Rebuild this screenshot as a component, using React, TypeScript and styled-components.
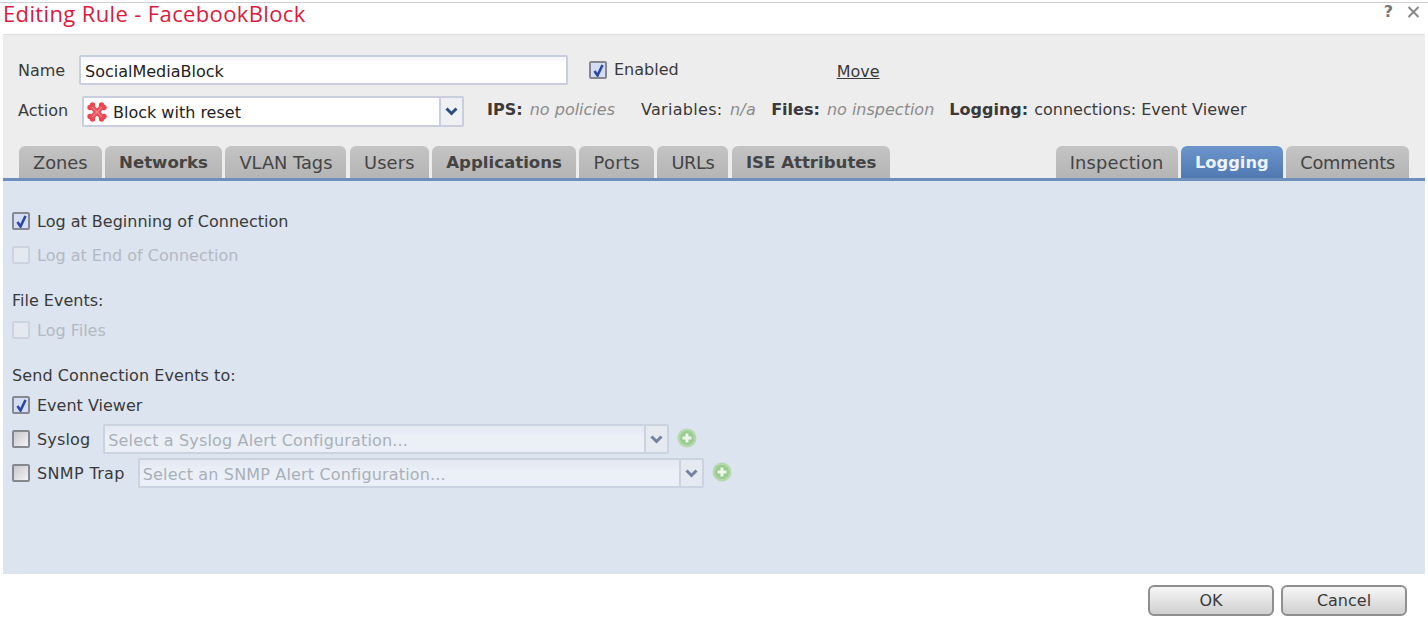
import { createGlobalStyle, styled } from "styled-components";

const GlobalStyle = createGlobalStyle`
    html, body { margin: 0; padding: 0; background: #fff; }
    body {
        font-family: "DejaVu Sans", Verdana, sans-serif;
        font-size: 16px;
        color: #3a3a3a;
        overflow: hidden;
    }
`;

const Dialog = styled.div`
    width: 1428px;
    height: 619px;
    display: flex;
    flex-direction: column;
    padding-top: 2px;
    box-sizing: border-box;
`;

const TitleBar = styled.div`
    height: 33px;
    flex: none;
    box-sizing: border-box;
    border-top: 1px solid #cfcfcf;
    display: flex;
    justify-content: space-between;
    padding: 0 8px 0 3px;
`;

const Title = styled.div`
    font-family: "Open Sans", sans-serif;
    font-size: 22px;
    letter-spacing: 0.37px;
    line-height: 20px;
    color: #dc1a40;
`;

const TitleIcons = styled.div`
    display: flex;
    align-items: flex-start;
    gap: 14px;
    font-size: 16px;
    font-weight: bold;
    line-height: 16px;
    color: #777;
    padding-top: 1px;
`;

const CloseIcon = styled.svg`
    margin-top: 2px;
`;

const Panel = styled.div`
    margin: 0 3px;
    height: 539px;
    flex: none;
    display: flex;
    flex-direction: column;
    box-shadow: 0 -1px 0 #e0e0e0;
`;

const Header = styled.div`
    background: #ededed;
    height: 143px;
    flex: none;
    box-sizing: border-box;
    padding: 20px 15px 0;
    display: flex;
    flex-direction: column;
`;

const Row = styled.div<{ $top?: number; $h?: number }>`
    display: flex;
    align-items: center;
    height: ${p => p.$h ?? 30}px;
    margin-top: ${p => p.$top ?? 0}px;
    white-space: nowrap;
`;

const FieldLabel = styled.span<{ $w: number }>`
    width: ${p => p.$w}px;
    flex: none;
    padding-bottom: ${p => (p.$w === 63 ? 2 : 0)}px;
    box-sizing: border-box;
`;

const TextInput = styled.div`
    width: 489px;
    height: 30px;
    box-sizing: border-box;
    border: 2px solid #c9cede;
    background: linear-gradient(#f4f5f8, #fff 30%);
    color: #222;
    line-height: 29px;
    padding-left: 4px;
    border-radius: 2px;
`;

const Check = styled.span<{ $on?: boolean; $off?: boolean }>`
    width: 18px;
    height: 18px;
    flex: none;
    box-sizing: border-box;
    display: inline-flex;
    align-items: center;
    justify-content: center;
    border: 2px solid ${p => (p.$off ? "#ced4df" : "#85888f")};
    border-radius: 2px;
    background: ${p => (p.$off ? "#e3e8f1" : p.$on ? "#d3ddf3" : "linear-gradient(135deg, #c8c8cc, #f4f4f6)")};
`;

const Tick = () => (
    <svg width="11" height="13" viewBox="0 0 11 13">
        <path d="M1.500 7 L4.500 11.500 L9.500 1" fill="none" stroke="#2f45a8" strokeWidth="2.600" />
    </svg>
);

const EnabledWrap = styled.label`
    display: flex;
    align-items: center;
    gap: 7px;
    margin-left: 21px;
    line-height: 18px;
`;

const EnabledText = styled.span`
    margin-top: -1px;
`;

const MoveLink = styled.a`
    margin-left: 158px;
    margin-top: 2px;
    text-decoration: underline;
    color: #3a3a3a;
`;

const ActionSelect = styled.div`
    width: 382px;
    height: 31px;
    margin-left: 1px;
    box-sizing: border-box;
    border: 2px solid #c9cede;
    border-radius: 2px;
    background: #fff;
    display: flex;
    align-items: center;
`;

const SelectValue = styled.div`
    flex: 1;
    display: flex;
    align-items: center;
    gap: 6px;
    padding-left: 3px;
    color: #222;
`;

const SelectText = styled.span`
    margin-top: 2px;
`;

const Arrow = styled.div<{ $muted?: boolean }>`
    width: 23px;
    height: 100%;
    flex: none;
    box-sizing: border-box;
    border-left: 2px solid ${p => (p.$muted ? "#ccd3e0" : "#c9cede")};
    background: ${p => (p.$muted ? "#e5e9f0" : "#eef0f4")};
    display: flex;
    align-items: center;
    justify-content: center;
`;

const Chevron = ({ color }: { color: string }) => (
    <svg width="13" height="9" viewBox="0 0 13 9">
        <path d="M1.500 1.500 L6.500 6.500 L11.500 1.500" fill="none" stroke={color} strokeWidth="3" />
    </svg>
);

const BlockIcon = () => (
    <svg width="20" height="20" viewBox="0 0 20 20">
        <g fill="#ee4650">
            <circle cx="3" cy="5.500" r="2.700" />
            <circle cx="5.500" cy="3" r="2.700" />
            <circle cx="17" cy="5.500" r="2.700" />
            <circle cx="14.500" cy="3" r="2.700" />
            <circle cx="3" cy="14.500" r="2.700" />
            <circle cx="5.500" cy="17" r="2.700" />
            <circle cx="17" cy="14.500" r="2.700" />
            <circle cx="14.500" cy="17" r="2.700" />
        </g>
        <path d="M4 4 L16 16 M16 4 L4 16" stroke="#ee4650" strokeWidth="5" />
        <path d="M5 5 L15 15 M15 5 L5 15" stroke="#f58a8e" strokeWidth="1.200" />
    </svg>
);

const Summary = styled.div`
    display: flex;
    align-items: center;
    margin-left: 23px;
    margin-bottom: 4px;
`;

const SummaryItem = styled.span<{ $gap?: number; $spread?: boolean }>`
    margin-right: ${p => p.$gap ?? 0}px;
    letter-spacing: ${p => (p.$spread ? 0.3 : 0)}px;
`;

const Muted = styled.i`
    color: #8b8b8b;
    margin-left: 2px;
`;

const Plain = styled.span`
    margin-left: 1px;
`;

const TabStrip = styled.div`
    display: flex;
    justify-content: space-between;
    align-items: flex-end;
    margin-top: 19px;
    padding: 0 1px;
`;

const TabGroup = styled.div`
    display: flex;
    gap: 3.500px;
`;

const Tab = styled.div<{ $bold?: boolean; $active?: boolean; $spacing?: number }>`
    height: 33px;
    box-sizing: border-box;
    padding: 0 14px;
    line-height: 34px;
    border-radius: 6px 6px 0 0;
    font-size: ${p => (p.$active ? 16.300 : p.$bold ? 16.600 : 17.800)}px;
    letter-spacing: ${p => p.$spacing ?? 0}px;
    font-weight: ${p => (p.$bold || p.$active ? "bold" : "normal")};
    color: ${p => (p.$active ? "#eef3fb" : "#444")};
    background: ${p => (p.$active ? "linear-gradient(#6b95cc, #4f78b0)" : "linear-gradient(#c4c4c4, #b4b4b4)")};
    white-space: nowrap;
`;

const Body = styled.div`
    flex: 1;
    background: #dce4ef;
    border-top: 3px solid #6c8fbb;
    padding: 28px 0 0 9px;
    display: flex;
    flex-direction: column;
`;

const CheckLabel = styled.span<{ $off?: boolean; $spread?: number }>`
    margin-left: 7px;
    color: ${p => (p.$off ? "#b3b9c2" : "#3a3a3a")};
    letter-spacing: ${p => p.$spread ?? 0}px;
`;

const SectionLabel = styled.div<{ $top: number; $spread?: number }>`
    height: 24px;
    line-height: 24px;
    margin-top: ${p => p.$top}px;
    margin-bottom: -1px;
    letter-spacing: ${p => p.$spread ?? 0}px;
`;

const AlertSelect = styled.div<{ $w: number; $left: number }>`
    width: ${p => p.$w}px;
    height: 30px;
    margin-left: ${p => p.$left}px;
    box-sizing: border-box;
    border: 2px solid #ccd3e0;
    border-radius: 2px;
    background: linear-gradient(#e3e8f1, #ebeff6 40%);
    display: flex;
    align-items: center;
    color: #a9afba;
`;

const AlertText = styled.div`
    flex: 1;
    padding-left: 3px;
    padding-top: 2px;
    letter-spacing: 0.16px;
`;

const AddButton = styled.span`
    width: 20px;
    height: 20px;
    margin-left: 8px;
    margin-top: -3px;
    flex: none;
`;

const AddIcon = () => (
    <AddButton>
        <svg width="20" height="20" viewBox="0 0 20 20">
            <circle cx="10" cy="10" r="9.500" fill="#b4d8ac" />
            <circle cx="10" cy="10" r="7" fill="#98cb90" />
            <path d="M10 5.500 V14.500 M5.500 10 H14.500" stroke="#eef6ec" strokeWidth="3" />
        </svg>
    </AddButton>
);

const Footer = styled.div`
    flex: 1;
    display: flex;
    justify-content: flex-end;
    gap: 7px;
    padding: 11px 21px 0 0;
`;

const Button = styled.button`
    width: 126px;
    height: 31px;
    box-sizing: border-box;
    border: 2px solid #8f8f8f;
    border-radius: 6px;
    background: linear-gradient(#f7f7f7, #cfcfcf);
    font: 16px "DejaVu Sans", Verdana, sans-serif;
    color: #3a3a3a;
    padding: 0;
`;

export default function App() {
    return (
        <Dialog>
            <GlobalStyle />
            <TitleBar>
                <Title>Editing Rule - FacebookBlock</Title>
                <TitleIcons>
                    <span>?</span>
                    <CloseIcon width="13" height="12" viewBox="0 0 13 12">
                        <path d="M1.500 1 L11.500 11 M11.500 1 L1.500 11" stroke="#888" strokeWidth="2" />
                    </CloseIcon>
                </TitleIcons>
            </TitleBar>
            <Panel>
                <Header>
                    <Row>
                        <FieldLabel $w={61}>Name</FieldLabel>
                        <TextInput>SocialMediaBlock</TextInput>
                        <EnabledWrap>
                            <Check $on><Tick /></Check>
                            <EnabledText>Enabled</EnabledText>
                        </EnabledWrap>
                        <MoveLink>Move</MoveLink>
                    </Row>
                    <Row $top={11} $h={31}>
                        <FieldLabel $w={63}>Action</FieldLabel>
                        <ActionSelect>
                            <SelectValue><BlockIcon /><SelectText>Block with reset</SelectText></SelectValue>
                            <Arrow><Chevron color="#2c4a86" /></Arrow>
                        </ActionSelect>
                        <Summary>
                            <SummaryItem $gap={26}><b>IPS:</b> <Muted>no policies</Muted></SummaryItem>
                            <SummaryItem $gap={15} $spread>Variables: <Muted>n/a</Muted></SummaryItem>
                            <SummaryItem $gap={15}><b>Files:</b> <Muted>no inspection</Muted></SummaryItem>
                            <SummaryItem><b>Logging:</b> <Plain>connections: Event Viewer</Plain></SummaryItem>
                        </Summary>
                    </Row>
                    <TabStrip>
                        <TabGroup>
                            <Tab>Zones</Tab>
                            <Tab $bold>Networks</Tab>
                            <Tab>VLAN Tags</Tab>
                            <Tab $spacing={0.2}>Users</Tab>
                            <Tab $bold>Applications</Tab>
                            <Tab $spacing={0.4}>Ports</Tab>
                            <Tab $spacing={-0.4}>URLs</Tab>
                            <Tab $bold>ISE Attributes</Tab>
                        </TabGroup>
                        <TabGroup>
                            <Tab $spacing={0.2}>Inspection</Tab>
                            <Tab $active>Logging</Tab>
                            <Tab $spacing={-0.2}>Comments</Tab>
                        </TabGroup>
                    </TabStrip>
                </Header>
                <Body>
                    <Row $h={24}>
                        <Check $on><Tick /></Check>
                        <CheckLabel>Log at Beginning of Connection</CheckLabel>
                    </Row>
                    <Row $top={10} $h={24}>
                        <Check $off />
                        <CheckLabel $off>Log at End of Connection</CheckLabel>
                    </Row>
                    <SectionLabel $top={22}>File Events:</SectionLabel>
                    <Row $top={6} $h={24}>
                        <Check $off />
                        <CheckLabel $off>Log Files</CheckLabel>
                    </Row>
                    <SectionLabel $top={22} $spread={0.08}>Send Connection Events to:</SectionLabel>
                    <Row $top={6} $h={24}>
                        <Check $on><Tick /></Check>
                        <CheckLabel>Event Viewer</CheckLabel>
                    </Row>
                    <Row $top={7}>
                        <Check />
                        <CheckLabel $spread={0.15}>Syslog</CheckLabel>
                        <AlertSelect $w={566} $left={13}>
                            <AlertText>Select a Syslog Alert Configuration...</AlertText>
                            <Arrow $muted><Chevron color="#76809f" /></Arrow>
                        </AlertSelect>
                        <AddIcon />
                    </Row>
                    <Row $top={4}>
                        <Check />
                        <CheckLabel $spread={0.35}>SNMP Trap</CheckLabel>
                        <AlertSelect $w={566} $left={13}>
                            <AlertText>Select an SNMP Alert Configuration...</AlertText>
                            <Arrow $muted><Chevron color="#76809f" /></Arrow>
                        </AlertSelect>
                        <AddIcon />
                    </Row>
                </Body>
            </Panel>
            <Footer>
                <Button>OK</Button>
                <Button>Cancel</Button>
            </Footer>
        </Dialog>
    );
}
